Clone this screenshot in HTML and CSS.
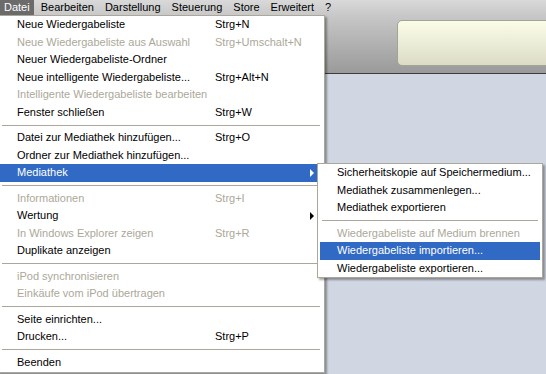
FILE: index.html
```html
<!DOCTYPE html>
<html lang="de">
<head>
    <meta charset="UTF-8">
    <title>iTunes - Datei</title>
    <link rel="stylesheet" href="styles.css">
</head>
<body>
    <div class="app">
        <div class="header">
            <div class="menubar">
                <span class="menubar-item active">Datei</span>
                <span class="menubar-item">Bearbeiten</span>
                <span class="menubar-item">Darstellung</span>
                <span class="menubar-item">Steuerung</span>
                <span class="menubar-item">Store</span>
                <span class="menubar-item">Erweitert</span>
                <span class="menubar-item">?</span>
            </div>
            <div class="toolbar">
                <div class="lcd"></div>
            </div>
        </div>
        <div class="library"></div>

        <!-- Datei menu -->
        <div class="menu main-menu">
            <div class="item"><span>Neue Wiedergabeliste</span><span>Strg+N</span></div>
            <div class="item disabled"><span>Neue Wiedergabeliste aus Auswahl</span><span>Strg+Umschalt+N</span></div>
            <div class="item"><span>Neuer Wiedergabeliste-Ordner</span><span></span></div>
            <div class="item"><span>Neue intelligente Wiedergabeliste...</span><span>Strg+Alt+N</span></div>
            <div class="item disabled"><span>Intelligente Wiedergabeliste bearbeiten</span><span></span></div>
            <div class="item"><span>Fenster schließen</span><span>Strg+W</span></div>
            <div class="sep"></div>
            <div class="item"><span>Datei zur Mediathek hinzufügen...</span><span>Strg+O</span></div>
            <div class="item"><span>Ordner zur Mediathek hinzufügen...</span><span></span></div>
            <div class="item selected has-sub"><span>Mediathek</span><span></span><i class="arrow"></i></div>
            <div class="sep"></div>
            <div class="item disabled"><span>Informationen</span><span>Strg+I</span></div>
            <div class="item has-sub"><span>Wertung</span><span></span><i class="arrow"></i></div>
            <div class="item disabled"><span>In Windows Explorer zeigen</span><span>Strg+R</span></div>
            <div class="item"><span>Duplikate anzeigen</span><span></span></div>
            <div class="sep"></div>
            <div class="item disabled"><span>iPod synchronisieren</span><span></span></div>
            <div class="item disabled"><span>Einkäufe vom iPod übertragen</span><span></span></div>
            <div class="sep"></div>
            <div class="item"><span>Seite einrichten...</span><span></span></div>
            <div class="item"><span>Drucken...</span><span>Strg+P</span></div>
            <div class="sep"></div>
            <div class="item"><span>Beenden</span><span></span></div>
        </div>

        <!-- Mediathek submenu -->
        <div class="menu sub-menu">
            <div class="item"><span>Sicherheitskopie auf Speichermedium...</span></div>
            <div class="item"><span>Mediathek zusammenlegen...</span></div>
            <div class="item"><span>Mediathek exportieren</span></div>
            <div class="sep"></div>
            <div class="item disabled"><span>Wiedergabeliste auf Medium brennen</span></div>
            <div class="item selected"><span>Wiedergabeliste importieren...</span></div>
            <div class="item"><span>Wiedergabeliste exportieren...</span></div>
        </div>
    </div>
</body>
</html>
```
FILE: styles.css
```css
body {
    margin: 0;
    width: 546px;
    height: 374px;
    overflow: hidden;
    font-family: "Liberation Sans", Arial, sans-serif;
    font-size: 11px;
    color: #000;
    background: #d0d6e2;
}
.app {
    position: relative;
    height: 374px;
}
.header {
    background: linear-gradient(#d9d9d9 0, #c8c8c8 15px, #9a9a9a 100%);
    border-bottom: 1px solid #3c3c3c;
    height: 73px;
}
.menubar {
    display: flex;
    height: 15px;
    line-height: 15px;
}
.menubar-item {
    padding: 0 4px;
    margin-right: 3px;
}
.menubar-item.active {
    background: #6b6b6b;
    color: #fff;
}
.toolbar {
    display: flex;
    padding: 5px 0 0 397px;
}
.lcd {
    flex-shrink: 0;
    width: 160px;
    height: 44px;
    border: 1px solid #a4a492;
    border-radius: 5px;
    background: linear-gradient(#fbfde8, #dcdcc6);
}
.library {
    height: 300px;
}

/* menus */
.menu {
    position: absolute;
    background: #fff;
    border: 1px solid #aca899;
    box-shadow: 2px 2px 2px rgba(0, 0, 0, 0.35);
}
.main-menu {
    left: -3px;
    top: 15px;
    width: 322px;
    padding: 0 2px 1px;
}
.sub-menu {
    left: 317px;
    top: 163px;
    width: 220px;
    padding: 0 2px;
}
.item {
    position: relative;
    display: grid;
    grid-template-columns: 198px 1fr;
    height: 17.5px;
    line-height: 17.5px;
    padding-left: 17px;
    white-space: nowrap;
}
.sub-menu .item {
    display: block;
}
.item.disabled {
    color: #aca899;
}
.item.selected {
    background: #316ac5;
    color: #fff;
}
.arrow {
    position: absolute;
    left: 310px;
    top: 5px;
    border-left: 4px solid #000;
    border-top: 4px solid transparent;
    border-bottom: 4px solid transparent;
}
.item.selected .arrow {
    border-left-color: #fff;
}
.sep {
    height: 1px;
    margin: 3.5px 2px;
    background: #aca899;
}
```
